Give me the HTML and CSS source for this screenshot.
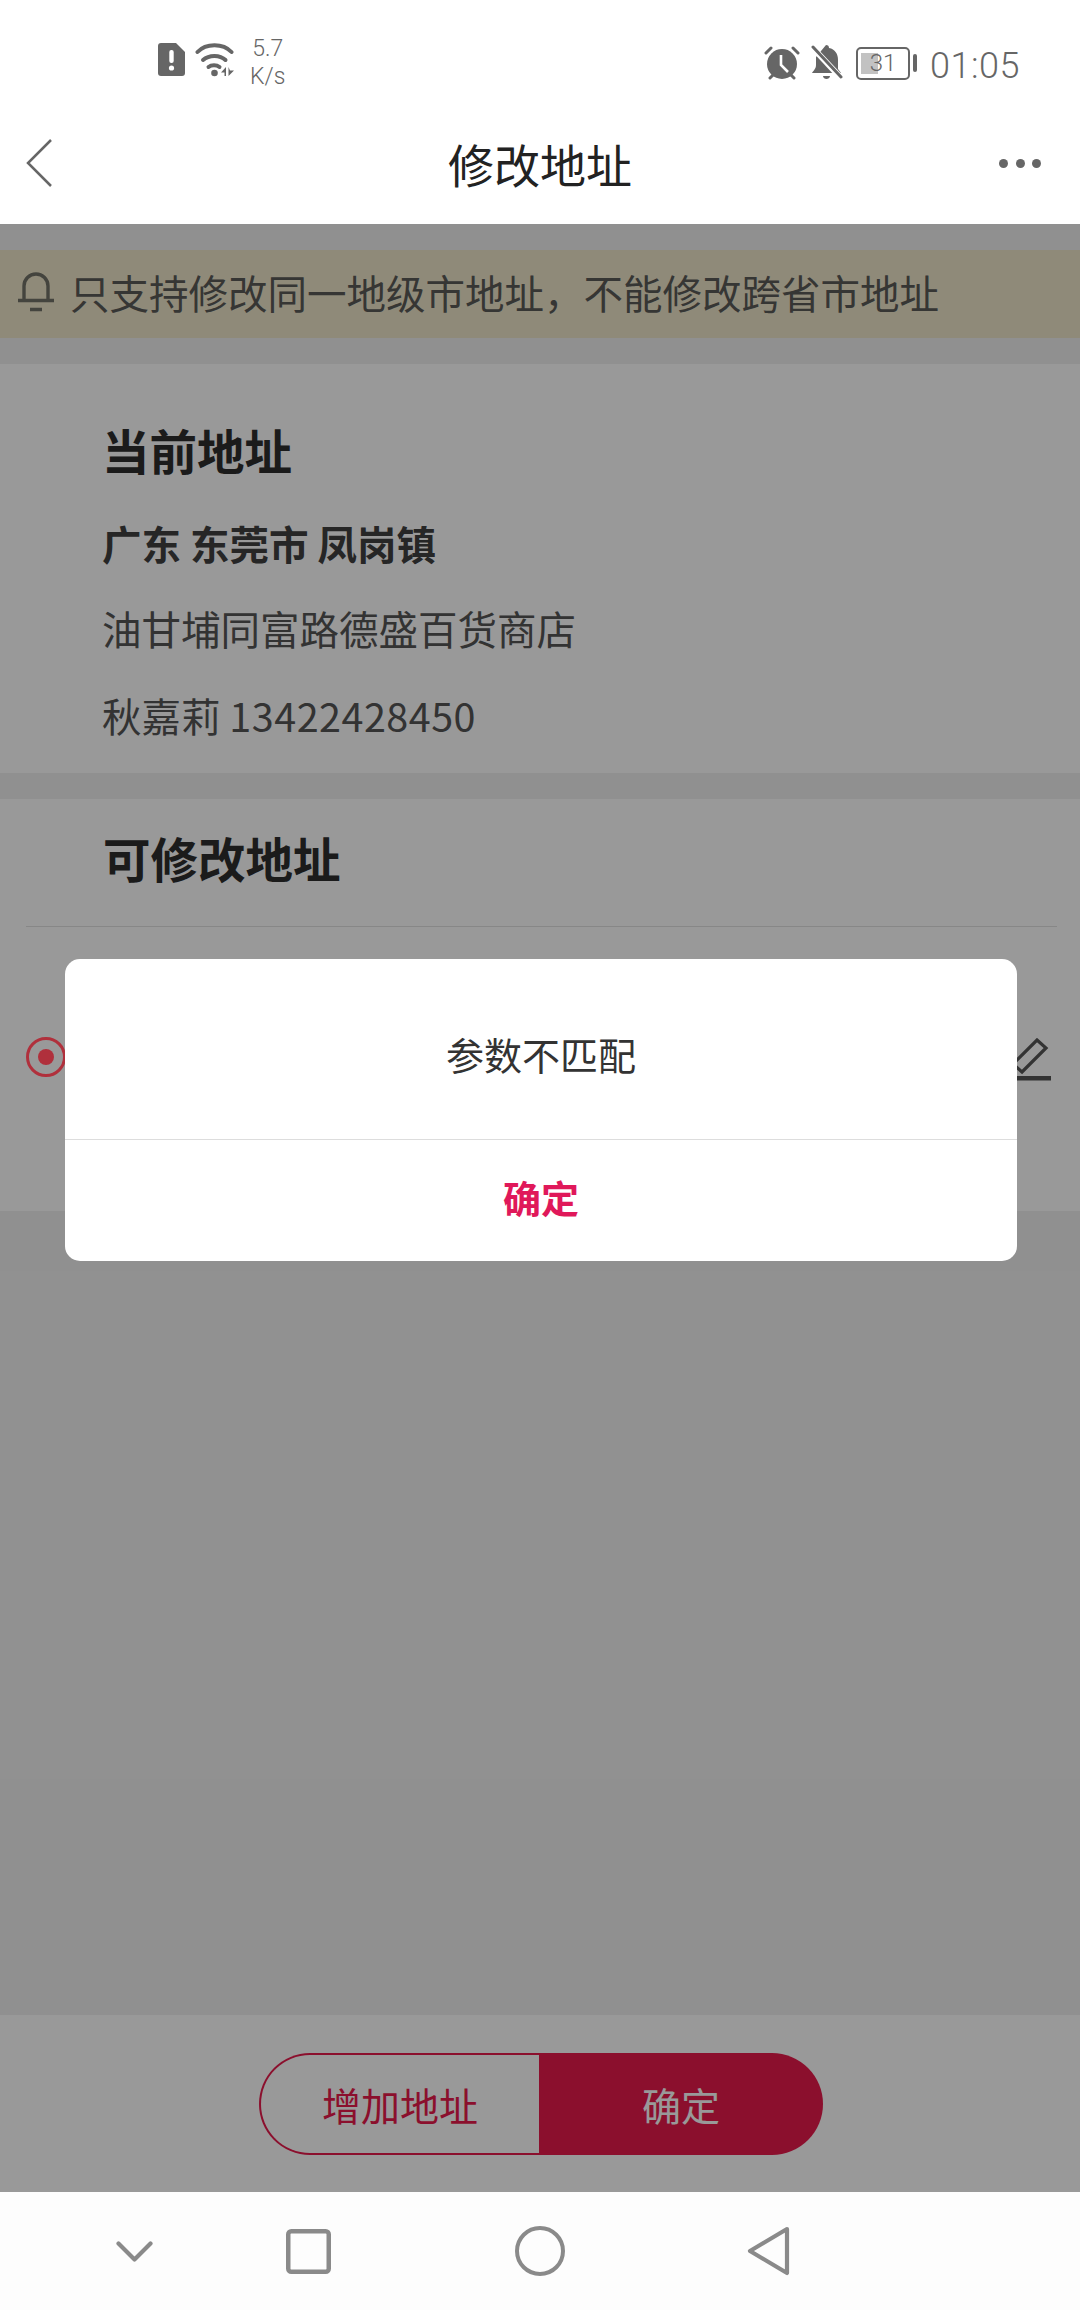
FILE: index.html
```html
<!DOCTYPE html>
<html lang="zh-CN">
<head>
    <meta charset="UTF-8">
    <meta name="viewport" content="width=device-width, initial-scale=1.0">
    <title>修改地址</title>
    <link rel="stylesheet" href="styles.css">
</head>
<body>
    <div class="screen">
        <div class="status-bar">
            <div class="status-left">
                <svg class="icon-sim" viewBox="0 0 27 33"><path d="M3 0h15l9 9v21a3 3 0 0 1-3 3H3a3 3 0 0 1-3-3V3a3 3 0 0 1 3-3z" fill="#666"/><rect x="11.300" y="7" width="4.400" height="13" rx="2" fill="#fff"/><circle cx="13.500" cy="25" r="2.600" fill="#fff"/></svg>
                <svg class="icon-wifi" viewBox="0 0 40 35"><g fill="none" stroke="#666" stroke-width="4" stroke-linecap="round"><path d="M2.500 10C11 1 28 1 36.500 10"/><path d="M8 18c6-5.500 17-5.500 22.500 0"/><path d="M13.500 25c3-2.500 8-2.500 11 0"/></g><circle cx="19.500" cy="31" r="3.300" fill="#666"/><path d="M31 25v9h-1.500v-3.500H26zM33.500 25v9l5.500-5.500h-4z" fill="#666"/></svg>
                <div class="net-speed"><span>5.7</span><span>K/s</span></div>
            </div>
            <div class="status-right">
                <svg class="icon-alarm" viewBox="0 0 36 34"><circle cx="18" cy="18" r="15" fill="#666"/><path d="M17 9v10l7 7" fill="none" stroke="#fff" stroke-width="2.600"/><path d="M2 7l5-5M34 7l-5-5M6 32l3-3M30 32l-3-3" stroke="#666" stroke-width="3" stroke-linecap="round"/></svg>
                <svg class="icon-mute" viewBox="0 0 32 36"><path d="M15 0c2 0 3 1 3 3 6 1 9 6 9 12v9l3 4H1c1-2 4-4 4-8V12z" fill="#666"/><path d="M12 31h7c0 2-2 3-3.500 3S12 33 12 31z" fill="#666"/><path d="M1 2l29 31" stroke="#fff" stroke-width="6"/><path d="M2 2l28 30" stroke="#666" stroke-width="3" stroke-linecap="round"/></svg>
                <div class="battery">
                    <div class="battery-body"><div class="battery-fill"></div><span class="battery-num">31</span></div>
                    <div class="battery-cap"></div>
                </div>
                <span class="clock">01:05</span>
            </div>
        </div>

        <div class="title-bar">
            <svg class="icon-back" viewBox="0 0 26 48"><path d="M25 1L2 24l23 23" fill="none" stroke="#666" stroke-width="2.500"/></svg>
            <h1>修改地址</h1>
            <div class="more"><i></i><i></i><i></i></div>
        </div>

        <div class="page">
            <div class="notice">
                <svg class="icon-bell" viewBox="0 0 38 40"><path d="M7 28V14a12 12 0 0 1 24 0v14M1 28.500h36M13 37.500h12" fill="none" stroke="#727268" stroke-width="3.400"/></svg>
                <span>只支持修改同一地级市地址，不能修改跨省市地址</span>
            </div>

            <section class="card current">
                <h2>当前地址</h2>
                <p class="region">广东 东莞市 凤岗镇</p>
                <p class="line">油甘埔同富路德盛百货商店</p>
                <p class="line">秋嘉莉 <span class="phone">13422428450</span></p>
            </section>

            <section class="card options">
                <h2>可修改地址</h2>
                <div class="option">
                    <svg class="icon-radio" viewBox="0 0 40 40"><circle cx="20" cy="20" r="18.500" fill="none" stroke="#b0303c" stroke-width="3"/><circle cx="20" cy="20" r="8" fill="#b0303c"/></svg>
                    <svg class="icon-edit" viewBox="0 0 38 44"><path d="M24 2l9 8-24 24-9-8z" fill="none" stroke="#555" stroke-width="3.200"/><rect x="0" y="38" width="38" height="4.500" fill="#555"/></svg>
                </div>
            </section>

            <div class="spacer"></div>

            <div class="footer">
                <div class="btn-group">
                    <div class="btn btn-add">增加地址</div>
                    <div class="btn btn-ok">确定</div>
                </div>
            </div>
            <div class="mask"></div>

            <div class="dialog">
                <div class="dialog-msg">参数不匹配</div>
                <div class="dialog-btn">确定</div>
            </div>
        </div>

        <div class="nav-bar">
            <svg class="nav-down" viewBox="0 0 37 21"><path d="M2.500 2.500L18.500 18.500 34.500 2.500" fill="none" stroke="#8a8a8a" stroke-width="4.200" stroke-linecap="round" stroke-linejoin="round"/></svg>
            <svg class="nav-square" viewBox="0 0 45 45"><rect x="2.250" y="2.250" width="40.500" height="40.500" rx="3" fill="none" stroke="#8a8a8a" stroke-width="4.500"/></svg>
            <svg class="nav-circle" viewBox="0 0 50 50"><circle cx="25" cy="25" r="23" fill="none" stroke="#8a8a8a" stroke-width="4"/></svg>
            <svg class="nav-back" viewBox="0 0 43 50"><path d="M40 3L3 25l37 22z" fill="none" stroke="#8a8a8a" stroke-width="4.200" stroke-linejoin="round"/></svg>
        </div>
    </div>
</body>
</html>
```

FILE: styles.css
```css
* {
    box-sizing: border-box;
}
html, body {
    margin: 0;
    padding: 0;
}
body {
    font-family: "Noto Sans CJK SC", "Noto Sans", sans-serif;
    background-color: #fff;
    color: #222;
}
h1, h2, p {
    margin: 0;
    font-weight: normal;
}
.screen {
    width: 1080px;
    height: 2310px;
    display: flex;
    flex-direction: column;
    overflow: hidden;
}

/* Status bar */
.status-bar {
    height: 112px;
    flex: none;
    display: flex;
    justify-content: space-between;
    align-items: flex-start;
    padding: 36px 60px 0 158px;
    color: #666;
    font-family: Roboto, sans-serif;
}
.status-left, .status-right {
    display: flex;
    align-items: center;
    height: 54px;
}
.icon-sim {
    width: 27px;
    height: 33px;
    margin-top: -8px;
}
.icon-wifi {
    width: 40px;
    height: 35px;
    margin: -8px 0 0 10px;
}
.net-speed {
    display: flex;
    flex-direction: column;
    align-items: center;
    margin-left: 15px;
    font-size: 23px;
    line-height: 28px;
    font-weight: 300;
}
.icon-alarm {
    width: 36px;
    height: 34px;
}
.icon-mute {
    width: 32px;
    height: 36px;
    margin-left: 11px;
}
.battery {
    display: flex;
    align-items: center;
    margin-left: 13px;
}
.battery-body {
    position: relative;
    width: 54px;
    height: 33px;
    border: 2px solid #666;
    border-radius: 5px;
    font-size: 24px;
    font-weight: 300;
    line-height: 29px;
    text-align: center;
}
.battery-fill {
    position: absolute;
    left: 3px;
    top: 4px;
    width: 17px;
    height: 21px;
    background-color: #c2c2c2;
}
.battery-num {
    position: relative;
}
.battery-cap {
    width: 4px;
    height: 18px;
    margin-left: 3px;
    background-color: #666;
    border-radius: 2px;
}
.clock {
    margin: 5px 0 0 13px;
    font-size: 36px;
    font-weight: 300;
    letter-spacing: 0.5px;
}

/* Title bar */
.title-bar {
    height: 112px;
    flex: none;
    display: grid;
    grid-template-columns: 1fr auto 1fr;
    align-items: center;
    padding: 0 39px;
}
.icon-back {
    width: 26px;
    height: 48px;
    margin: 0 0 10px -13px;
}
.title-bar h1 {
    font-size: 46px;
    line-height: 60px;
    color: #222;
    margin-bottom: 10px;
}
.more {
    justify-self: end;
    display: flex;
    gap: 7.5px;
    margin-bottom: 10px;
}
.more i {
    width: 9px;
    height: 9px;
    background-color: #666;
    border-radius: 50%;
}

/* Page under the dimming mask */
.page {
    position: relative;
    flex: 1;
    display: flex;
    flex-direction: column;
    background-color: #f1f1f1;
    padding-top: 26px;
}
.notice {
    height: 88px;
    flex: none;
    display: flex;
    align-items: center;
    padding-left: 17px;
    background-color: #efe6ca;
    font-size: 39.5px;
    color: #5a5a58;
}
.icon-bell {
    width: 38px;
    height: 40px;
    margin-right: 15px;
    margin-top: -5px;
}
.notice span {
    margin-top: -6px;
}
.card {
    flex: none;
    background-color: #fff;
}
.card h2 {
    font-size: 47.5px;
    line-height: 60px;
    font-weight: 700;
    color: #2e2e2e;
}
.current {
    height: 409px;
    margin-top: 26px;
    padding: 56px 0 0 102px;
}
.region {
    margin-top: 38px;
    font-size: 39.5px;
    line-height: 50px;
    font-weight: 700;
    color: #404040;
}
.line {
    margin-top: 35px;
    font-size: 39.5px;
    line-height: 50px;
    color: #555;
}
.line + .line {
    margin-top: 37px;
}
.phone {
    letter-spacing: 0.5px;
}
.options {
    height: 412px;
    margin-top: 26px;
    padding: 29px 23px 0 26px;
}
.options h2 {
    padding-left: 77px;
    padding-bottom: 38px;
    border-bottom: 1px solid #e2e2e2;
}
.option {
    display: flex;
    justify-content: space-between;
    align-items: flex-start;
    padding-top: 110px;
}
/* the ring stays bright through the mask in the reference */
.icon-radio {
    position: relative;
    z-index: 1;
    width: 40px;
    height: 40px;
}
.icon-edit {
    width: 38px;
    height: 44px;
    margin: 1px 6px 0 0;
}
.spacer {
    flex: 1;
}

/* Bottom buttons */
.footer {
    height: 177px;
    flex: none;
    background-color: #fff;
    display: flex;
    align-items: flex-start;
    justify-content: center;
    padding: 38px 0 0 2px;
}
.btn-group {
    display: flex;
    width: 564px;
    height: 102px;
}
.btn {
    display: flex;
    align-items: center;
    justify-content: center;
    font-size: 39px;
}
.btn-add {
    width: 280px;
    border: 2px solid #e81a4c;
    border-right: none;
    border-radius: 51px 0 0 51px;
    color: #e81a4c;
}
.btn-ok {
    width: 284px;
    background-color: #e81a4c;
    border-radius: 0 51px 51px 0;
    color: #fff;
}

.mask {
    position: absolute;
    inset: 0;
    background-color: rgba(0, 0, 0, 0.4);
}

/* Dialog */
.dialog {
    position: absolute;
    z-index: 2;
    left: 65px;
    top: 735px;
    width: 952px;
    height: 302px;
    background-color: #fff;
    border-radius: 15px;
    display: flex;
    flex-direction: column;
}
.dialog-msg {
    height: 181px;
    display: flex;
    align-items: center;
    justify-content: center;
    padding-top: 8px;
    border-bottom: 1px solid #ddd;
    font-size: 38px;
    color: #333;
}
.dialog-btn {
    flex: 1;
    display: flex;
    align-items: center;
    justify-content: center;
    padding-bottom: 8px;
    font-size: 38px;
    font-weight: 700;
    color: #e0185a;
}

/* Navigation bar */
.nav-bar {
    height: 118px;
    flex: none;
    display: flex;
    align-items: center;
    padding-left: 116px;
    background-color: #fdfdfd;
}
.nav-down {
    width: 37px;
    height: 21px;
}
.nav-square {
    width: 45px;
    height: 45px;
    margin-left: 133px;
}
.nav-circle {
    width: 50px;
    height: 50px;
    margin-left: 184px;
}
.nav-back {
    width: 43px;
    height: 50px;
    margin-left: 182px;
}
```
